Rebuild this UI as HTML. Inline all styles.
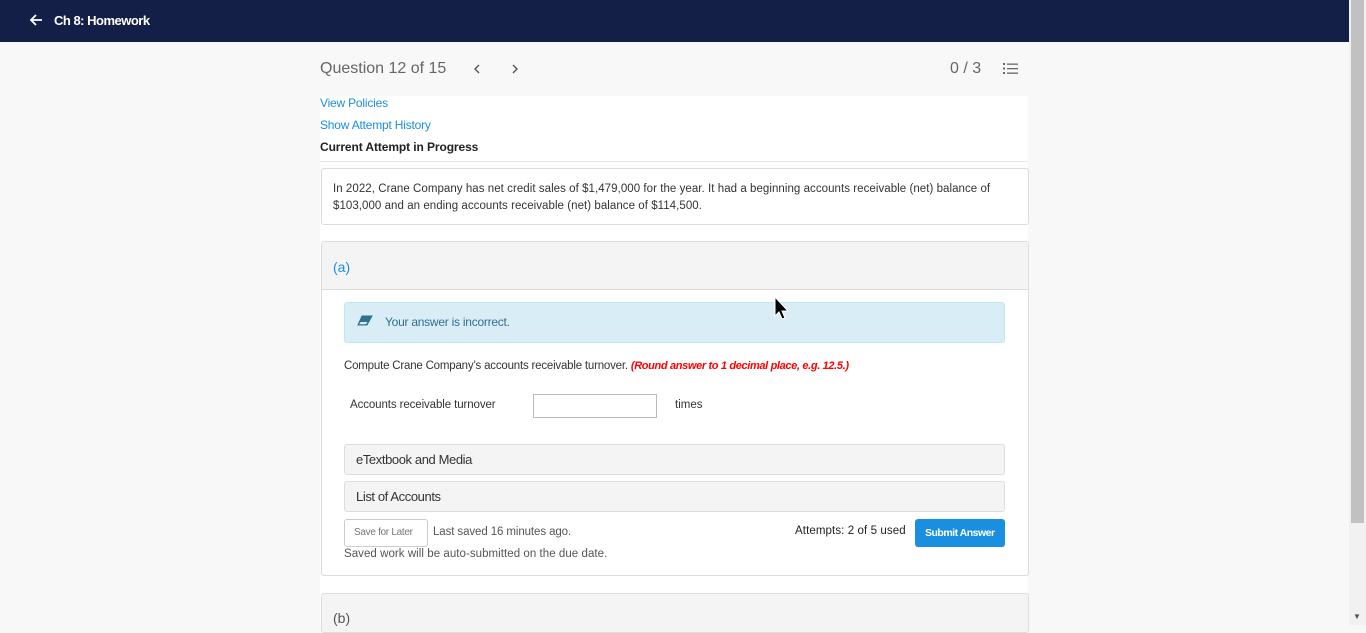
<!DOCTYPE html>
<html><head><meta charset="utf-8"><style>
*{margin:0;padding:0;box-sizing:border-box}
body{width:1366px;height:625px;overflow:hidden;background:#f8f8f8;font-family:"Liberation Sans",sans-serif;position:relative;color:#333}
.a{position:absolute;white-space:nowrap}
.hdr{left:0;top:0;width:1349px;height:42px;background:#141f47}
.sb{left:1349px;top:0;width:17px;height:625px;background:#f1f1f1}
.thumb{left:1351px;top:0;width:13px;height:523px;background:#c1c1c1}
.white{left:320px;top:96px;width:708px;height:529px;background:#fff}
.box{border:1px solid #dcdcdc;border-radius:3px;background:#fff}
.gray{background:#f4f4f4;border:1px solid #ddd;border-radius:3px}
</style></head><body>
<div class="a hdr"></div>
<svg class="a" style="left:29px;top:13px" width="14" height="14" viewBox="0 0 14 14"><path d="M13 7H2M7 2L2 7l5 5" stroke="#fff" stroke-width="1.8" fill="none"/></svg>
<div class="a" style="left:54px;top:13px;color:#fff;font-weight:bold;font-size:13px;letter-spacing:-0.5px">Ch 8: Homework</div>
<div class="a sb"></div><div class="a thumb"></div>
<div class="a" style="left:1353px;top:612px;font-size:8px;color:#555">▼</div>
<div class="a white"></div>
<div class="a" style="left:320px;top:60px;font-size:16px;color:#666">Question 12 of 15</div>
<svg class="a" style="left:472px;top:63px" width="10" height="12"><path d="M7 2L3 6l4 4" stroke="#555" stroke-width="1.4" fill="none"/></svg>
<svg class="a" style="left:510px;top:63px" width="10" height="12"><path d="M3 2l4 4-4 4" stroke="#555" stroke-width="1.4" fill="none"/></svg>
<div class="a" style="left:950px;top:60px;font-size:16px;color:#666">0 / 3</div>
<svg class="a" style="left:1003px;top:62px" width="16" height="14"><g fill="#666"><rect x="0" y="1" width="2" height="2"/><rect x="0" y="5.5" width="2" height="2"/><rect x="0" y="10" width="2" height="2"/><rect x="4" y="1.5" width="11" height="1.3"/><rect x="4" y="6" width="11" height="1.3"/><rect x="4" y="10.5" width="11" height="1.3"/></g></svg>
<div class="a" style="left:320px;top:96px;font-size:12px;color:#1b8fdf;letter-spacing:-0.2px">View Policies</div>
<div class="a" style="left:320px;top:118px;font-size:12px;color:#1b8fdf;letter-spacing:-0.2px">Show Attempt History</div>
<div class="a" style="left:320px;top:140px;font-size:12px;color:#222;letter-spacing:-0.1px;font-weight:bold;-webkit-text-stroke:0">Current Attempt in Progress</div>
<div class="a" style="left:320px;top:161px;width:708px;height:1px;background:#e6e6e6"></div>
<div class="a box" style="left:321px;top:168px;width:708px;height:57px"></div>
<div class="a" style="left:333px;top:181px;font-size:11.5px;line-height:17px;color:#333;letter-spacing:0.05px">In 2022, Crane Company has net credit sales of $1,479,000 for the year. It had a beginning accounts receivable (net) balance of<br>$103,000 and an ending accounts receivable (net) balance of $114,500.</div>
<div class="a box" style="left:321px;top:241px;width:708px;height:335px"></div>
<div class="a" style="left:322px;top:242px;width:706px;height:48px;background:#f4f4f4;border-bottom:1px solid #ddd"></div>
<div class="a" style="left:333px;top:259px;font-size:14px;color:#1b8fdf">(a)</div>
<div class="a" style="left:344px;top:302px;width:661px;height:41px;background:#d9edf7;border:1px solid #bce8f1;border-radius:3px"></div>
<svg class="a" style="left:357px;top:315px" width="16" height="11"><path d="M5 1h10l-5 9H1z" fill="#31708f" stroke="#31708f" stroke-width="1"/><path d="M3.5 7h7L9 9.3H2.2z" fill="#d9edf7"/></svg>
<div class="a" style="left:385px;top:315px;font-size:12px;color:#31708f;letter-spacing:-0.25px">Your answer is incorrect.</div>
<div class="a" style="left:344px;top:360px;font-size:11.5px;color:#333;letter-spacing:-0.2px">Compute Crane Company’s accounts receivable turnover. <b style="color:#f00;font-style:italic;font-size:11px;letter-spacing:-0.35px">(Round answer to 1 decimal place, e.g. 12.5.)</b></div>
<div class="a" style="left:350px;top:399px;font-size:11.5px;color:#333;letter-spacing:-0.1px">Accounts receivable turnover</div>
<div class="a" style="left:533px;top:394px;width:124px;height:24px;border:1px solid #bbb;background:#fff"></div>
<div class="a" style="left:675px;top:399px;font-size:11.5px;color:#333">times</div>
<div class="a gray" style="left:344px;top:444px;width:661px;height:31px"></div>
<div class="a" style="left:356px;top:452px;font-size:13px;color:#333;letter-spacing:-0.4px">eTextbook and Media</div>
<div class="a gray" style="left:344px;top:481px;width:661px;height:31px"></div>
<div class="a" style="left:356px;top:489px;font-size:13px;color:#333;letter-spacing:-0.4px">List of Accounts</div>
<div class="a" style="left:344px;top:519px;width:84px;height:28px;border:1px solid #ccc;border-radius:3px;background:#fff"></div>
<div class="a" style="left:354px;top:527px;font-size:10px;color:#777;letter-spacing:-0.3px">Save for Later</div>
<div class="a" style="left:433px;top:526px;font-size:11.5px;color:#555;letter-spacing:-0.1px">Last saved 16 minutes ago.</div>
<div class="a" style="left:344px;top:548px;font-size:11.5px;color:#555;letter-spacing:0.05px">Saved work will be auto-submitted on the due date.</div>
<div class="a" style="left:795px;top:525px;font-size:11.5px;color:#222;letter-spacing:0.1px">Attempts: 2 of 5 used</div>
<div class="a" style="left:915px;top:519px;width:90px;height:28px;background:#1a8fe0;border-radius:3px"></div>
<div class="a" style="left:925px;top:527px;font-size:10.5px;color:#fff;font-weight:bold;letter-spacing:-0.5px">Submit Answer</div>
<div class="a" style="left:321px;top:593px;width:708px;height:40px;background:#f4f4f4;border:1px solid #ddd;border-radius:3px"></div>
<div class="a" style="left:333px;top:610px;font-size:14px;color:#555">(b)</div>
<svg class="a" style="left:774px;top:296px" width="14" height="26"><path d="M1 1v19l4-4 3 7 3-1-3-7h6z" fill="#000" stroke="#fff" stroke-width="1"/></svg>
</body></html>
